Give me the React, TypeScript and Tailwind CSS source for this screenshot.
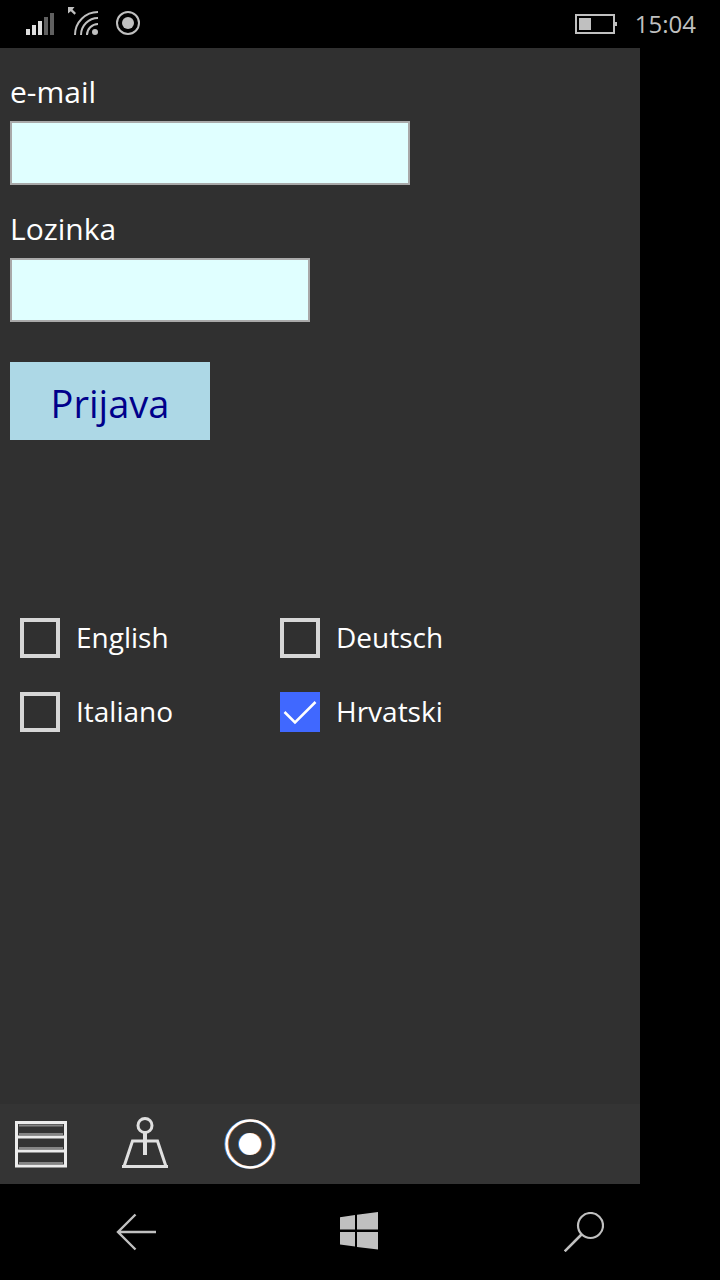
import { useState } from "react";

const LANGUAGES = [
  { id: "en", name: "English" },
  { id: "de", name: "Deutsch" },
  { id: "it", name: "Italiano" },
  { id: "hr", name: "Hrvatski" },
];

function StatusBar() {
  return (
    <header className="flex h-12 items-center justify-between bg-black px-6 text-[#c0c0c0]">
      {/* Signal, wifi and location indicators */}
      <svg width="120" height="48" viewBox="24 0 120 48" fill="none" aria-hidden="true">
        <g fill="#dedede">
          <rect x="26" y="29" width="4" height="6" />
          <rect x="32" y="25" width="4" height="10" />
          <rect x="38" y="21" width="4" height="14" />
        </g>
        <g fill="#606060">
          <rect x="44" y="17" width="4" height="18" />
          <rect x="50" y="13" width="4" height="22" />
        </g>
        <path d="M68 7H74.500L72.500 9.500L76 13L74.500 14.800L70.800 11.200L68 13.500Z" fill="currentColor" />
        <g stroke="currentColor" strokeWidth="2">
          <path d="M75 35A23 23 0 0 1 98 12" />
          <path d="M81 35A17 17 0 0 1 98 18" />
          <path d="M87 35A11 11 0 0 1 98 24" />
        </g>
        <circle cx="95" cy="32" r="3" fill="currentColor" />
        <circle cx="128" cy="23" r="11" stroke="currentColor" strokeWidth="2" />
        <circle cx="128" cy="23" r="6" fill="currentColor" />
      </svg>
      <div className="flex items-center gap-[18px]">
        <svg width="42" height="20" viewBox="0 0 42 20" fill="none" aria-hidden="true">
          <rect x="1" y="1" width="38" height="18" stroke="currentColor" strokeWidth="2" />
          <rect x="4" y="4" width="12" height="12" fill="currentColor" />
          <rect x="40" y="8" width="2" height="4" fill="currentColor" />
        </svg>
        <time className="text-[24px] leading-8">15:04</time>
      </div>
    </header>
  );
}

function Field({ id, label, type, width }: { id: string; label: string; type: string; width: string }) {
  return (
    <div className="flex flex-col gap-[9px]">
      <label htmlFor={id} className="text-[30px] leading-10">{label}</label>
      <input
        id={id}
        type={type}
        className={`h-16 max-w-full border-2 border-[#a9a9a9] bg-[#e0ffff] px-3 text-[30px] text-black outline-none ${width}`}
      />
    </div>
  );
}

function LanguageCheck({ name, checked, onSelect }: { name: string; checked: boolean; onSelect: () => void }) {
  return (
    <label className="flex h-10 items-center gap-4 text-[28px] leading-[38px]">
      <span className="grid">
        <input
          type="checkbox"
          checked={checked}
          onChange={onSelect}
          className="col-start-1 row-start-1 size-10 appearance-none border-4 border-[#d6d6d6] checked:border-[#4068ff] checked:bg-[#4068ff]"
        />
        {checked && (
          <svg className="pointer-events-none col-start-1 row-start-1 size-10" viewBox="0 0 40 40" fill="none" stroke="white" strokeWidth="2.500" aria-hidden="true">
            <path d="M4.500 20L15 30.500L35.500 10" />
          </svg>
        )}
      </span>
      <span className="pb-[2px]">{name}</span>
    </label>
  );
}

function AppBar() {
  return (
    <nav className="flex h-20 items-center bg-[#343434]">
      <button aria-label="Menu" className="flex w-[82px] justify-center">
        <svg width="56" height="56" viewBox="13 1116 56 56" fill="none" stroke="#ececec" strokeWidth="3">
          <path d="M19 1125.500H63M19 1134H63M19 1148H63M19 1163H63" stroke="#858585" strokeWidth="2" />
          <rect x="16.500" y="1122.500" width="49" height="43.500" />
          <path d="M16 1137H66M16 1151H66" />
        </svg>
      </button>
      <button aria-label="Joystick" className="flex w-[126px] justify-center">
        <svg width="56" height="56" viewBox="117 1116 56 56" fill="none" stroke="#e0e0e0" strokeWidth="3">
          <circle cx="145" cy="1125.500" r="7" />
          <path d="M145 1132.500V1155" strokeWidth="4" />
          <path d="M143 1141H132.500L124 1166.500H166L157.500 1141H147" />
          <path d="M122 1166.500H168" />
        </svg>
      </button>
      <button aria-label="Record" className="flex w-[84px] justify-center">
        <svg width="56" height="56" viewBox="222 1116 56 56" fill="none">
          <circle cx="249" cy="1144" r="23.500" stroke="#2f80d8" strokeWidth="2.500" />
          <circle cx="251" cy="1144" r="23.500" stroke="#c8763a" strokeWidth="2.500" />
          <circle cx="250" cy="1144" r="23.500" stroke="white" strokeWidth="2.500" />
          <circle cx="249" cy="1144" r="11" fill="#2f80d8" />
          <circle cx="251" cy="1144" r="11" fill="#c8763a" />
          <circle cx="250" cy="1144" r="11" fill="white" />
        </svg>
      </button>
    </nav>
  );
}

function SystemNav() {
  return (
    <nav className="flex h-24 items-center justify-between bg-black px-[116px] text-[#c0c0c0]">
      <button aria-label="Back">
        <svg width="40" height="40" viewBox="0 0 40 40" fill="none" stroke="currentColor" strokeWidth="2.400">
          <path d="M19.500 2.500L2 20L19.500 37.500M2 20H40" />
        </svg>
      </button>
      <button aria-label="Start">
        <svg width="40" height="40" viewBox="0 0 40 40" fill="currentColor">
          <path d="M0 5.200L15 3V17.500H0ZM17 2.700L38 0V17.500H17ZM0 20H15V34.600L0 32.500ZM17 20H38V37.500L17 34.900Z" />
        </svg>
      </button>
      <button aria-label="Search">
        <svg width="40" height="40" viewBox="0 0 40 40" fill="none" stroke="currentColor" strokeWidth="2.200">
          <circle cx="26.500" cy="13.500" r="12.500" />
          <path d="M17.500 22.500L0.700 39.300" strokeWidth="2.600" />
        </svg>
      </button>
    </nav>
  );
}

export default function App() {
  const [language, setLanguage] = useState("hr");

  return (
    <div className="flex min-h-screen flex-col bg-black font-['Open_Sans',sans-serif] text-white">
      <StatusBar />
      <div className="mr-20 flex flex-1 flex-col bg-[#303030]">
        <main className="flex-1 px-[10px] pt-6">
          <form onSubmit={(e) => e.preventDefault()}>
            <div className="flex flex-col gap-6">
              <Field id="email" label="e-mail" type="email" width="w-[400px]" />
              <Field id="password" label="Lozinka" type="password" width="w-[300px]" />
            </div>
            <button type="submit" className="mt-10 flex h-[78px] w-[200px] items-center justify-center bg-[#add8e6] pt-1 text-[38px] leading-none text-[#00008b]">
              Prijava
            </button>
          </form>
          <div className="mt-[178px] grid grid-cols-[260px_260px] gap-y-[34px] pl-[10px]">
            {LANGUAGES.map((l) => (
              <LanguageCheck key={l.id} name={l.name} checked={language === l.id} onSelect={() => setLanguage(l.id)} />
            ))}
          </div>
        </main>
        <AppBar />
      </div>
      <SystemNav />
    </div>
  );
}
